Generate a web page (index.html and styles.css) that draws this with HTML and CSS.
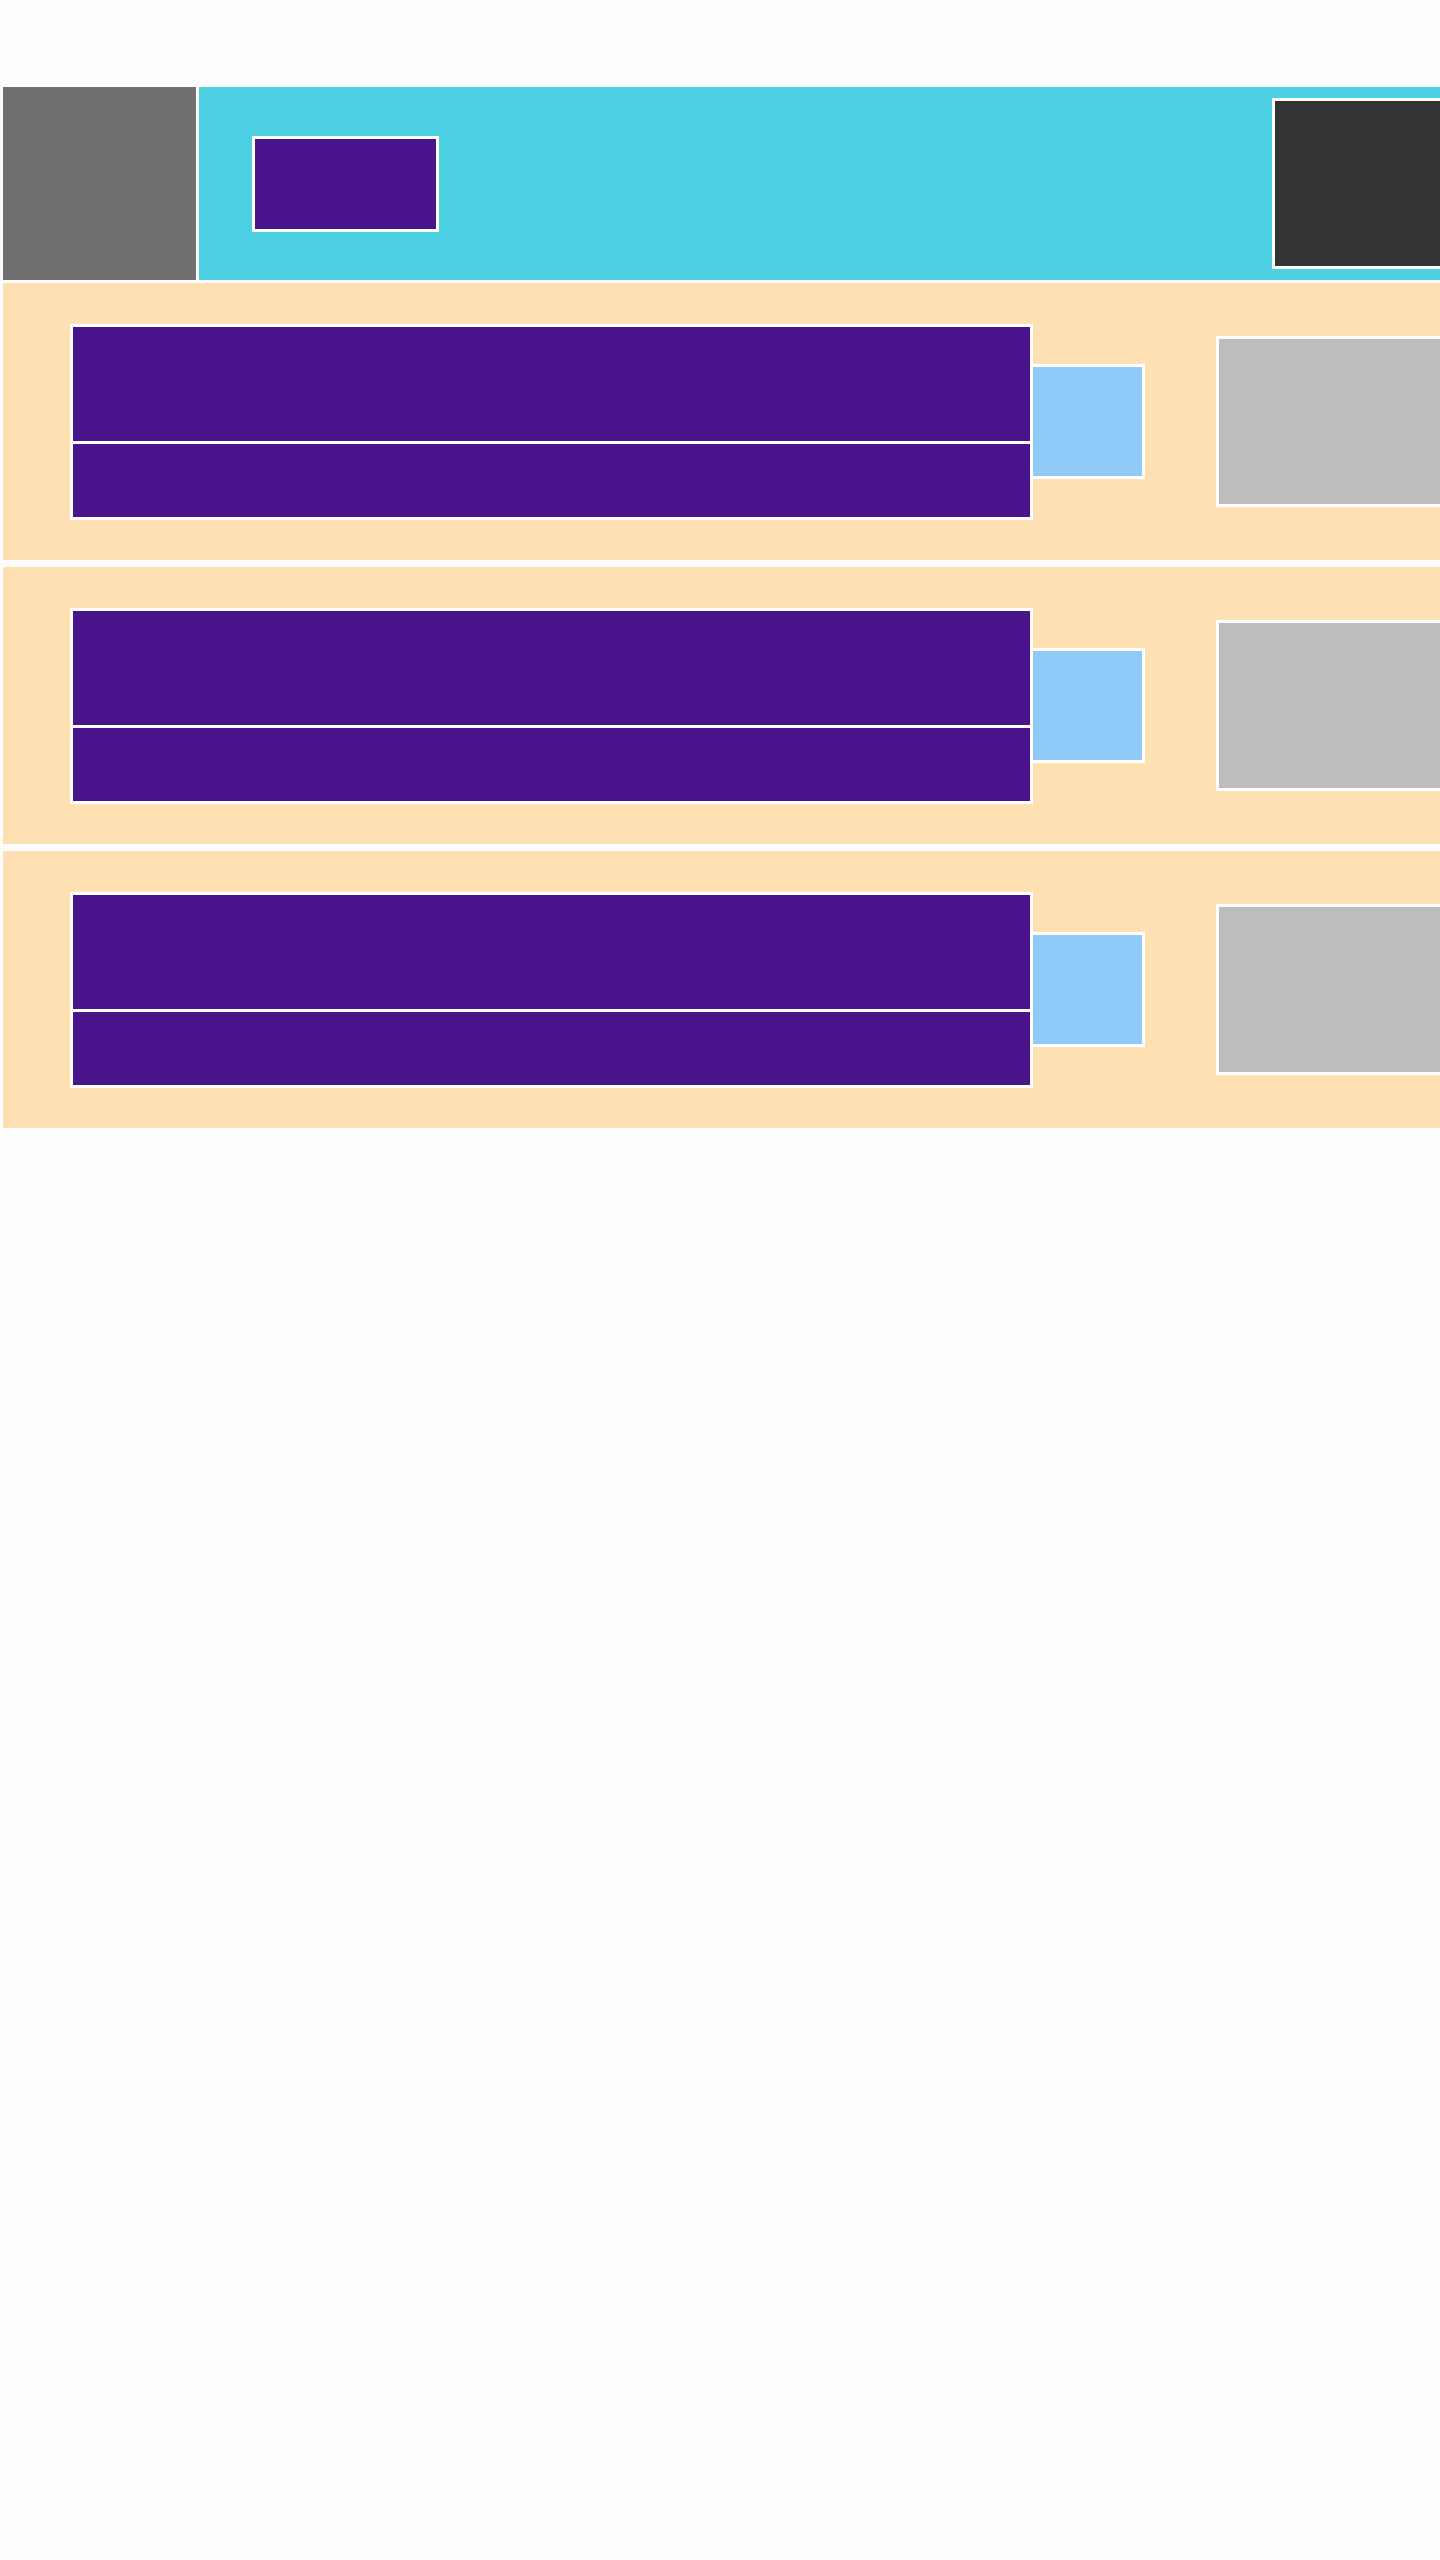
FILE: index.html
```html
<!DOCTYPE html>
<html>

<head>
    <title>Layout</title>
    <link rel="stylesheet" href="styles.css">
</head>

<body>
    <div class="page">
        <header class="top">
            <div class="logo"></div>
            <div class="bar">
                <div class="bar-button"></div>
                <div class="bar-panel"></div>
            </div>
        </header>

        <section class="row">
            <div class="fields">
                <div class="field"></div>
                <div class="field short"></div>
            </div>
            <div class="toggle"></div>
            <div class="preview"></div>
        </section>

        <section class="row">
            <div class="fields">
                <div class="field"></div>
                <div class="field short"></div>
            </div>
            <div class="toggle"></div>
            <div class="preview"></div>
        </section>

        <section class="row">
            <div class="fields">
                <div class="field"></div>
                <div class="field short"></div>
            </div>
            <div class="toggle"></div>
            <div class="preview"></div>
        </section>
    </div>
</body>

</html>
```

FILE: styles.css
```css
html,
body {
    margin: 0;
    overflow: hidden;
    background-color: #fdfdfd;
}

.page {
    width: 1700px;
    padding: 87px 0 0 3px;
}

.top {
    display: flex;
    gap: 3px;
    height: 193px;
}

.logo {
    width: 193px;
    background-color: #707070;
}

.bar {
    flex: 1;
    display: flex;
    align-items: center;
    padding-left: 53px;
    background-color: #4dd0e1;
}

.bar-button {
    box-sizing: border-box;
    width: 187px;
    height: 96px;
    border: 3px solid #fff;
    background-color: #4a148c;
}

.bar-panel {
    box-sizing: border-box;
    width: 260px;
    height: 171px;
    margin-left: 833px;
    border: 3px solid #fff;
    background-color: #333;
}

.row {
    display: flex;
    align-items: center;
    height: 277px;
    margin-top: 7px;
    padding-left: 67px;
    background-color: #ffe0b2;
}

.top + .row {
    margin-top: 3px;
}

.fields {
    display: flex;
    flex-direction: column;
    gap: 3px;
    width: 957px;
    padding: 3px;
    background-color: #fff;
}

.field {
    height: 114px;
    background-color: #4a148c;
}

.field.short {
    height: 73px;
}

.toggle {
    box-sizing: border-box;
    width: 115px;
    height: 115px;
    margin-left: -3px;
    border: 3px solid #fff;
    background-color: #90caf9;
}

.preview {
    box-sizing: border-box;
    width: 300px;
    height: 171px;
    margin-left: 71px;
    border: 3px solid #fff;
    background-color: #bdbdbd;
}
```
